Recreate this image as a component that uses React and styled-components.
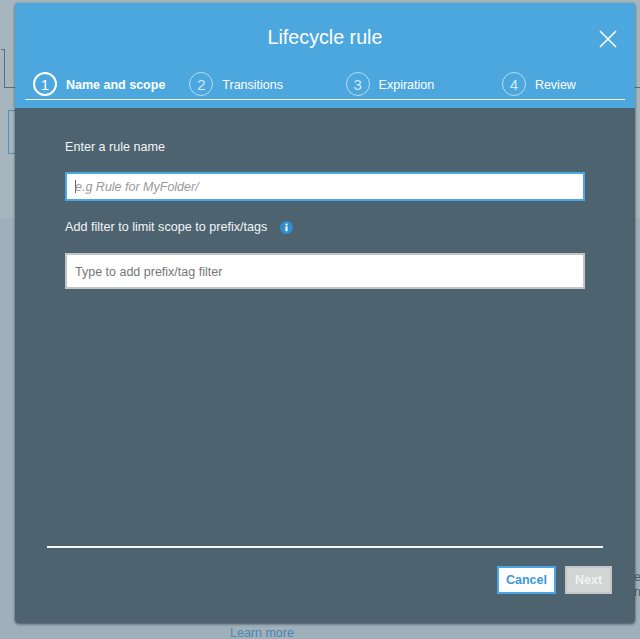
import React from "react";
import styled, { createGlobalStyle } from "styled-components";

const GlobalStyle = createGlobalStyle`
    html, body {
        margin: 0;
        padding: 0;
        background: #a0b0ba;
        font-family: "Liberation Sans", Arial, sans-serif;
    }
`;

const steps = [
    { number: 1, label: "Name and scope", active: true },
    { number: 2, label: "Transitions" },
    { number: 3, label: "Expiration" },
    { number: 4, label: "Review" },
];

const App = () => {
    return (
        <Pagina>
            <GlobalStyle />
            <FondoSuperior />
            <LineaFondo />
            <CajaFondo />
            <LineaDerecha />
            <TextoDerecha>e<br />ne</TextoDerecha>
            <Aprender>Learn more</Aprender>
            <Modal>
                <Cabecera>
                    <Titulo>Lifecycle rule</Titulo>
                    <Cerrar aria-label="Close">
                        <svg width="18" height="18" viewBox="0 0 18 18" fill="none" stroke="#fff" strokeWidth="1.6">
                            <path d="M1 1 L17 17 M17 1 L1 17" />
                        </svg>
                    </Cerrar>
                    <Pasos>
                        {steps.map((step) => (
                            <Paso key={step.number}>
                                <Circulo $active={step.active}>{step.number}</Circulo>
                                <Etiqueta $active={step.active}>{step.label}</Etiqueta>
                            </Paso>
                        ))}
                    </Pasos>
                </Cabecera>
                <Cuerpo>
                    <Formulario>
                        <Rotulo>Enter a rule name</Rotulo>
                        <CampoNombre>
                            <Cursor />
                            <Sugerencia>e.g Rule for MyFolder/</Sugerencia>
                        </CampoNombre>
                        <RotuloFiltro>
                            Add filter to limit scope to prefix/tags
                            <svg width="13" height="13" viewBox="0 0 12 12">
                                <circle cx="6" cy="6" r="6" fill="#2f8fd0" />
                                <rect x="5" y="5" width="2" height="4.4" fill="#fff" />
                                <rect x="5" y="2.4" width="2" height="1.7" fill="#fff" />
                            </svg>
                        </RotuloFiltro>
                        <CampoFiltro>Type to add prefix/tag filter</CampoFiltro>
                    </Formulario>
                    <Separador />
                    <Acciones>
                        <Cancelar>Cancel</Cancelar>
                        <Siguiente>Next</Siguiente>
                    </Acciones>
                </Cuerpo>
            </Modal>
        </Pagina>
    );
}

const Pagina = styled.div`
    position: relative;
    width: 640px;
    height: 639px;
    overflow: hidden;
    background: #a0b0ba;
`;

const FondoSuperior = styled.div`
    height: 218px;
    background: #a7b6be;
`;

const LineaFondo = styled.div`
    position: absolute;
    left: 4px;
    top: 49px;
    width: 14px;
    height: 39px;
    box-sizing: border-box;
    border-left: 1px solid #56707f;
    border-bottom: 1px solid #56707f;
    &::before {
        content: "";
        position: absolute;
        left: -4px;
        top: 0;
        width: 4px;
        height: 1px;
        background: #56707f;
    }
`;

const CajaFondo = styled.div`
    position: absolute;
    left: 8px;
    top: 110px;
    width: 12px;
    height: 44px;
    box-sizing: border-box;
    border: 1px solid #4f8fb8;
`;

const LineaDerecha = styled.div`
    position: absolute;
    left: 630px;
    top: 87px;
    width: 10px;
    height: 1px;
    background: #56707f;
`;

const TextoDerecha = styled.div`
    position: absolute;
    left: 634px;
    top: 570px;
    font-size: 12px;
    line-height: 15px;
    color: #4a5c66;
`;

const Aprender = styled.a`
    position: absolute;
    left: 230px;
    top: 626px;
    font-size: 12.5px;
    line-height: 14px;
    color: #4a87b4;
`;

const Modal = styled.div`
    position: absolute;
    left: 15px;
    top: 3px;
    width: 620px;
    height: 620px;
    display: flex;
    flex-direction: column;
    border-radius: 4px;
    overflow: hidden;
    background: #4d6370;
    box-shadow: 0 1px 3px rgba(30, 40, 48, 0.75);
`;

const Cabecera = styled.header`
    position: relative;
    height: 105px;
    flex: none;
    box-sizing: border-box;
    padding: 0 10px;
    background: #4ca7de;
    display: flex;
    flex-direction: column;
`;

const Titulo = styled.h1`
    margin: 22px 0 0;
    height: 24px;
    font-size: 19.7px;
    line-height: 24px;
    font-weight: 400;
    text-align: center;
    color: #fff;
`;

const Cerrar = styled.button`
    position: absolute;
    right: 18px;
    top: 27px;
    width: 18px;
    height: 18px;
    padding: 0;
    border: 0;
    background: none;
    line-height: 0;
`;

const Pasos = styled.nav`
    margin-top: 21px;
    height: 30px;
    box-sizing: border-box;
    padding: 2px 0 3px 8px;
    border-bottom: 1px solid #fff;
    display: grid;
    grid-template-columns: repeat(4, 156.3px);
`;

const Paso = styled.div`
    display: flex;
    align-items: center;
    gap: 9px;
    height: 24px;
`;

const Circulo = styled.span`
    width: 24px;
    height: 24px;
    box-sizing: border-box;
    border-radius: 50%;
    display: flex;
    align-items: center;
    justify-content: center;
    font-size: 15px;
    color: ${(props) => (props.$active ? "#fff" : "rgba(255, 255, 255, 0.75)")};
    border: ${(props) => (props.$active ? "2px solid #fff" : "1px solid rgba(255, 255, 255, 0.6)")};
`;

const Etiqueta = styled.span`
    padding-top: 1px;
    font-size: 12.5px;
    color: #fff;
    font-weight: ${(props) => (props.$active ? 700 : 400)};
`;

const Cuerpo = styled.main`
    flex: 1;
    display: flex;
    flex-direction: column;
`;

const Formulario = styled.div`
    flex: 1;
    display: flex;
    flex-direction: column;
    align-items: flex-start;
    padding: 31px 50px 0;
`;

const Rotulo = styled.label`
    font-size: 12.6px;
    line-height: 16px;
    color: #f2f5f6;
`;

const CampoNombre = styled.div`
    margin-top: 17px;
    width: 520px;
    height: 29px;
    box-sizing: border-box;
    display: flex;
    align-items: center;
    padding-left: 8px;
    background: #fff;
    border: 2px solid #4aa6e4;
`;

const Cursor = styled.span`
    width: 1px;
    height: 13px;
    margin-right: -1px;
    background: #666;
`;

const Sugerencia = styled.span`
    font-size: 12.5px;
    font-style: italic;
    color: #999;
`;

const RotuloFiltro = styled(Rotulo)`
    margin-top: 18px;
    display: flex;
    align-items: center;
    gap: 13px;
`;

const CampoFiltro = styled.div`
    margin-top: 18px;
    width: 520px;
    height: 36px;
    box-sizing: border-box;
    display: flex;
    align-items: center;
    padding: 1px 0 0 8px;
    background: #fff;
    border: 2px solid #c2c4c6;
    font-size: 12.5px;
    color: #777;
`;

const Separador = styled.hr`
    margin: 0 32px 0 32px;
    height: 2px;
    border: 0;
    background: #f4f6f7;
`;

const Acciones = styled.div`
    height: 75px;
    box-sizing: border-box;
    padding: 18px 23px 0 0;
    display: flex;
    justify-content: flex-end;
    align-items: flex-start;
    gap: 9px;
`;

const Boton = styled.button`
    height: 28px;
    padding: 0;
    font-family: inherit;
    font-size: 12.5px;
    font-weight: 700;
    box-sizing: border-box;
`;

const Cancelar = styled(Boton)`
    width: 59px;
    background: #fff;
    color: #3a97dc;
    border: 2px solid #4aa6e4;
`;

const Siguiente = styled(Boton)`
    width: 47px;
    background: #d3d5d5;
    color: #f2f2f2;
    border: 2px solid #c4c7c7;
`;

export default App;
